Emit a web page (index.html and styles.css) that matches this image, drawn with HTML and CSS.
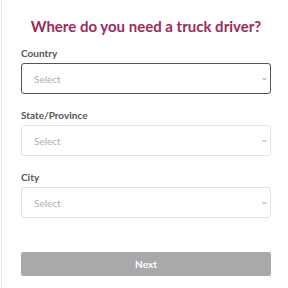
FILE: index.html
```html
<!DOCTYPE html>
<html>
<head>
<meta charset="utf-8">
<link rel="stylesheet" href="styles.css">
</head>
<body>
<div class="panel">
  <h1 class="title">Where do you need a truck driver?</h1>
  <div class="field">
    <label class="label">Country</label>
    <div class="select focused"><span>Select</span><svg class="chev" width="5" height="4" viewBox="0 0 5 4"><path d="M0.5 1 L2.5 3 L4.5 1" fill="none" stroke="#9a9a9a" stroke-width="1"/></svg></div>
  </div>
  <div class="field">
    <label class="label">State/Province</label>
    <div class="select"><span>Select</span><svg class="chev" width="5" height="4" viewBox="0 0 5 4"><path d="M0.5 1 L2.5 3 L4.5 1" fill="none" stroke="#9a9a9a" stroke-width="1"/></svg></div>
  </div>
  <div class="field">
    <label class="label">City</label>
    <div class="select"><span>Select</span><svg class="chev" width="5" height="4" viewBox="0 0 5 4"><path d="M0.5 1 L2.5 3 L4.5 1" fill="none" stroke="#9a9a9a" stroke-width="1"/></svg></div>
  </div>
  <button class="next">Next</button>
</div>
</body>
</html>
```
FILE: styles.css
```css
html, body {
  margin: 0;
  padding: 0;
  background: #fff;
}
body {
  font-family: Lato, "Open Sans", sans-serif;
  width: 288px;
  height: 288px;
  overflow: hidden;
}
.panel {
  margin-left: 1px;
  border-left: 1px solid #e6e6e6;
  height: 288px;
  box-sizing: border-box;
  padding: 15px 17px 0 19px;
  display: flex;
  flex-direction: column;
}
.title {
  margin: 0 0 9px 0;
  font-size: 15px;
  font-weight: 700;
  color: #9c2a5c;
  text-align: center;
  line-height: 22px;
}
.field {
  display: flex;
  flex-direction: column;
  margin-bottom: 14px;
}
.label {
  font-size: 10px;
  font-weight: 700;
  color: #555;
  line-height: 14px;
  margin-bottom: 3px;
}
.select {
  height: 31px;
  box-sizing: border-box;
  border: 1px solid #e3e3e3;
  border-radius: 3px;
  display: flex;
  align-items: center;
  justify-content: space-between;
  padding: 0 3px 0 12px;
  font-size: 10px;
  color: #b0b0b0;
}
.select.focused {
  border-color: #555;
}
.chev {
  display: block;
}
.next {
  margin-top: 20px;
  height: 24px;
  flex: 0 0 24px;
  border: none;
  border-radius: 2px;
  background: #a9a9ac;
  color: #fff;
  font-family: Lato, sans-serif;
  font-weight: 700;
  font-size: 10px;
  padding: 0;
}
```
